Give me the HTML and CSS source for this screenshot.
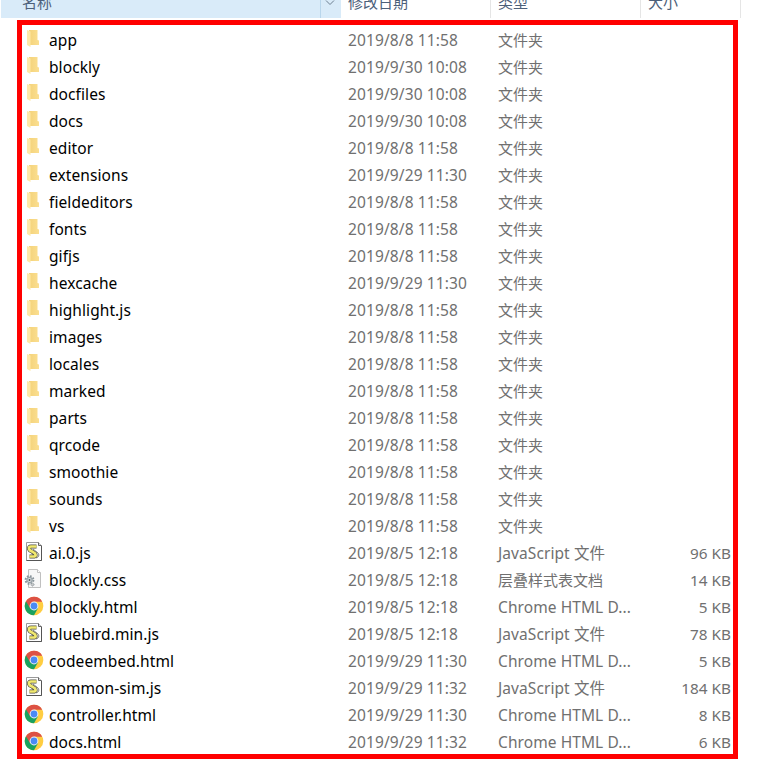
FILE: index.html
```
<!DOCTYPE html>
<html lang="zh-CN">
<head>
<meta charset="utf-8">
<title>文件列表</title>
<link rel="stylesheet" href="styles.css">
</head>
<body>
<svg class="defs" aria-hidden="true">
  <linearGradient id="fold" x1="0" x2="1"><stop offset="0" stop-color="#f4d27a"/><stop offset="1" stop-color="#fbdf90"/></linearGradient>
  <symbol id="folder" viewBox="0 0 20 20">
    <path d="M5 1h8.500v10l1.500.5V16H5z" fill="url(#fold)"/>
    <path d="M3 1l3.500 1.500V18L3 16z" fill="#ffe9a6"/>
  </symbol>
  <symbol id="js" viewBox="0 0 20 20">
    <path d="M2.500.5h12l3 3v15h-15z" fill="#fff" stroke="#9a9a9a"/>
    <path d="M14.500.5v3h3" fill="#ddd" stroke="#666"/>
    <path d="M17.500 4v14.500h-15" fill="none" stroke="#555"/>
    <path d="M12.500 4.500H7Q4.500 4.500 5 7q.5 1.500 3 2.500l3 2q1.500 2.500-.5 3H5.500" fill="none" stroke="#4e4e42" stroke-width="4"/>
    <path d="M12.500 4.500H7Q4.500 4.500 5 7q.5 1.500 3 2.500l3 2q1.500 2.500-.5 3H5.500" fill="none" stroke="#f1e96f" stroke-width="2.700"/>
    <path d="M9 7l5 4q2 2 0 4l-2 1" fill="none" stroke="#66665a" stroke-width=".8"/>
  </symbol>
  <symbol id="css" viewBox="0 0 20 20">
    <path d="M4.500.5h9l3 3v15h-12z" fill="#f7f7f7" stroke="#c0c0c0"/>
    <path d="M13.500.5v3h3" fill="#fff" stroke="#c0c0c0"/>
    <circle cx="5.500" cy="11" r="3.900" fill="none" stroke="#8a959b" stroke-width="2" stroke-dasharray="1.700 1.360"/>
    <circle cx="5.500" cy="11" r="2.600" fill="#dce1e4" stroke="#9aa4a9" stroke-width="1.300"/>
    <circle cx="5.500" cy="11" r="1" fill="#49545a"/>
    <circle cx="8.500" cy="15.500" r="1.500" fill="#ccc" stroke="#8a959b" stroke-dasharray="1 .6"/>
  </symbol>
  <symbol id="chrome" viewBox="0 0 20 20">
    <circle cx="10" cy="10" r="9.300" fill="#ffcd41"/>
    <path d="M10 10L1.950 5.350A9.300 9.300 0 0 0 10 19.300L14.030 12.300z" fill="#1aa15f"/>
    <path d="M10 5.700h8.250A9.300 9.300 0 0 0 1.950 5.350L6.100 12.200z" fill="#dd5144"/>
    <circle cx="10" cy="10" r="4.400" fill="#f4f4f4"/>
    <circle cx="10" cy="10" r="3.400" fill="#4a8af4"/>
  </symbol>
</svg>
<header class="head">
  <div class="th th-name"><span>名称</span></div>
  <div class="th th-drop"><svg width="10" height="6" viewBox="0 0 10 6"><path d="M1 .5l4 4 4-4" fill="none" stroke="#6d7f90"/></svg></div>
  <div class="th"><span>修改日期</span></div>
  <div class="th"><span>类型</span></div>
  <div class="th"><span>大小</span></div>
</header>
<main class="list">
<div class="row"><svg class="icon"><use href="#folder"/></svg><span class="name">app</span><span class="date">2019/8/8 11:58</span><span class="type">文件夹</span></div>
<div class="row"><svg class="icon"><use href="#folder"/></svg><span class="name">blockly</span><span class="date">2019/9/30 10:08</span><span class="type">文件夹</span></div>
<div class="row"><svg class="icon"><use href="#folder"/></svg><span class="name">docfiles</span><span class="date">2019/9/30 10:08</span><span class="type">文件夹</span></div>
<div class="row"><svg class="icon"><use href="#folder"/></svg><span class="name">docs</span><span class="date">2019/9/30 10:08</span><span class="type">文件夹</span></div>
<div class="row"><svg class="icon"><use href="#folder"/></svg><span class="name">editor</span><span class="date">2019/8/8 11:58</span><span class="type">文件夹</span></div>
<div class="row"><svg class="icon"><use href="#folder"/></svg><span class="name">extensions</span><span class="date">2019/9/29 11:30</span><span class="type">文件夹</span></div>
<div class="row"><svg class="icon"><use href="#folder"/></svg><span class="name">fieldeditors</span><span class="date">2019/8/8 11:58</span><span class="type">文件夹</span></div>
<div class="row"><svg class="icon"><use href="#folder"/></svg><span class="name">fonts</span><span class="date">2019/8/8 11:58</span><span class="type">文件夹</span></div>
<div class="row"><svg class="icon"><use href="#folder"/></svg><span class="name">gifjs</span><span class="date">2019/8/8 11:58</span><span class="type">文件夹</span></div>
<div class="row"><svg class="icon"><use href="#folder"/></svg><span class="name">hexcache</span><span class="date">2019/9/29 11:30</span><span class="type">文件夹</span></div>
<div class="row"><svg class="icon"><use href="#folder"/></svg><span class="name">highlight.js</span><span class="date">2019/8/8 11:58</span><span class="type">文件夹</span></div>
<div class="row"><svg class="icon"><use href="#folder"/></svg><span class="name">images</span><span class="date">2019/8/8 11:58</span><span class="type">文件夹</span></div>
<div class="row"><svg class="icon"><use href="#folder"/></svg><span class="name">locales</span><span class="date">2019/8/8 11:58</span><span class="type">文件夹</span></div>
<div class="row"><svg class="icon"><use href="#folder"/></svg><span class="name">marked</span><span class="date">2019/8/8 11:58</span><span class="type">文件夹</span></div>
<div class="row"><svg class="icon"><use href="#folder"/></svg><span class="name">parts</span><span class="date">2019/8/8 11:58</span><span class="type">文件夹</span></div>
<div class="row"><svg class="icon"><use href="#folder"/></svg><span class="name">qrcode</span><span class="date">2019/8/8 11:58</span><span class="type">文件夹</span></div>
<div class="row"><svg class="icon"><use href="#folder"/></svg><span class="name">smoothie</span><span class="date">2019/8/8 11:58</span><span class="type">文件夹</span></div>
<div class="row"><svg class="icon"><use href="#folder"/></svg><span class="name">sounds</span><span class="date">2019/8/8 11:58</span><span class="type">文件夹</span></div>
<div class="row"><svg class="icon"><use href="#folder"/></svg><span class="name">vs</span><span class="date">2019/8/8 11:58</span><span class="type">文件夹</span></div>
<div class="row"><svg class="icon"><use href="#js"/></svg><span class="name">ai.0.js</span><span class="date">2019/8/5 12:18</span><span class="type latin">JavaScript 文件</span><span class="size">96 KB</span></div>
<div class="row"><svg class="icon"><use href="#css"/></svg><span class="name">blockly.css</span><span class="date">2019/8/5 12:18</span><span class="type">层叠样式表文档</span><span class="size">14 KB</span></div>
<div class="row"><svg class="icon"><use href="#chrome"/></svg><span class="name">blockly.html</span><span class="date">2019/8/5 12:18</span><span class="type latin">Chrome HTML D...</span><span class="size">5 KB</span></div>
<div class="row"><svg class="icon"><use href="#js"/></svg><span class="name">bluebird.min.js</span><span class="date">2019/8/5 12:18</span><span class="type latin">JavaScript 文件</span><span class="size">78 KB</span></div>
<div class="row"><svg class="icon"><use href="#chrome"/></svg><span class="name">codeembed.html</span><span class="date">2019/9/29 11:30</span><span class="type latin">Chrome HTML D...</span><span class="size">5 KB</span></div>
<div class="row"><svg class="icon"><use href="#js"/></svg><span class="name">common-sim.js</span><span class="date">2019/9/29 11:32</span><span class="type latin">JavaScript 文件</span><span class="size">184 KB</span></div>
<div class="row"><svg class="icon"><use href="#chrome"/></svg><span class="name">controller.html</span><span class="date">2019/9/29 11:30</span><span class="type latin">Chrome HTML D...</span><span class="size">8 KB</span></div>
<div class="row"><svg class="icon"><use href="#chrome"/></svg><span class="name">docs.html</span><span class="date">2019/9/29 11:32</span><span class="type latin">Chrome HTML D...</span><span class="size">6 KB</span></div>
</main>
</body>
</html>
```
FILE: styles.css
```
* { box-sizing: border-box; }
body {
  margin: 0;
  height: 765px;
  overflow: hidden;
  background: #fff;
  color: #707070;
  font: 15px/27px "Noto Sans", "Noto Sans CJK SC", sans-serif;
}
.defs { display: block; width: 0; height: 0; }
.head {
  display: grid;
  grid-template-columns: 320px 20px 150px 150px 100px;
  height: 18px;
  width: 741px;
  padding-left: 1px;
  overflow: hidden;
  color: #4c607a;
}
.th { height: 18px; padding-left: 7px; border-right: 1px solid #e5e5e5; overflow: hidden; }
.th span { display: block; margin-top: -11px; }
.th-name { padding-left: 21px; background: #d9ebf9; border-color: #b9d6ec; }
.th-drop { padding-left: 4px; background: #d9ebf9; border: 0; line-height: 0; }
.list {
  margin: 2px 0 0 17px;
  width: 721px;
  height: 739px;
  padding-top: 2px;
  border: 5px solid #f00;
  overflow: hidden;
}
.row {
  display: grid;
  grid-template-columns: 27px 299px 150px 150px 83px;
  height: 27px;
  white-space: pre;
}
.icon { width: 20px; height: 20px; margin: 2px 0 0 2px; }
.name { color: #000; font-size: 15.500px; letter-spacing: .08px; }
.date { font-size: 15.500px; letter-spacing: .12px; }
.latin { font-size: 15.500px; letter-spacing: .08px; }
.size { text-align: right; font-size: 15.300px; }
```
